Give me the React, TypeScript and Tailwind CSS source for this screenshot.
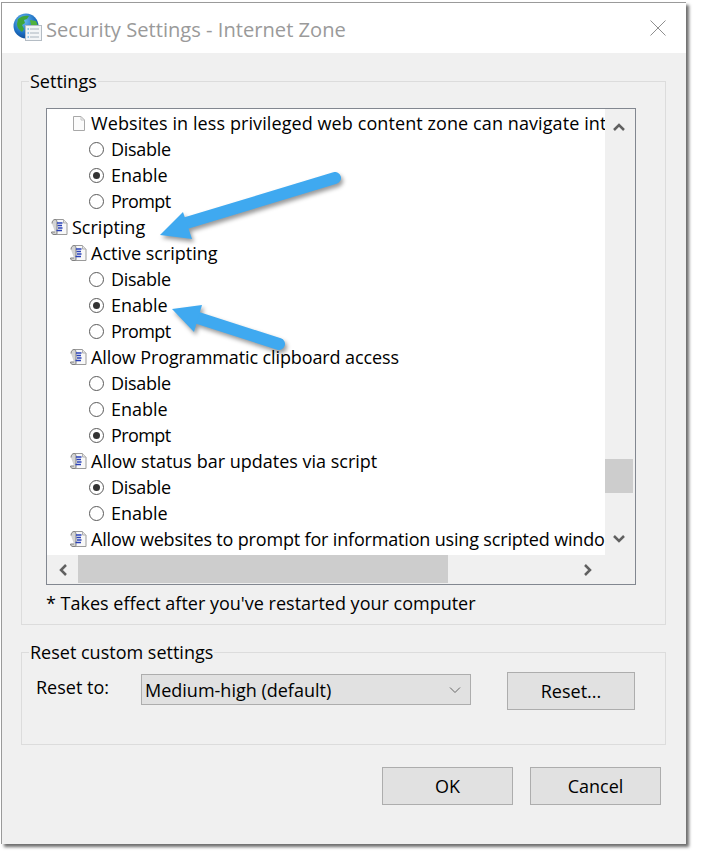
import React from "react";

const FONT = "[font-family:'Open_Sans','Noto_Sans',sans-serif]";

function Radio({ on }: { on?: boolean }) {
  return (
    <span className="flex h-[15px] w-[15px] shrink-0 items-center justify-center rounded-full border border-[#5a5a5a] bg-white">
      {on && <span className="h-[7px] w-[7px] rounded-full bg-[#333333]" />}
    </span>
  );
}

function ScriptIcon() {
  return (
    <svg width="17" height="18" viewBox="0 0 17 18" className="shrink-0">
      <path d="M4 1.500h8.500l3.500 3.500v11.500H5" fill="#f8f8f8" stroke="#9a9a9a" />
      <path d="M12.500 1.500V5H16" fill="#e4e4e4" stroke="#b0b0b0" />
      <path d="M1 5.500c0-2.500 1.500-4 3-4s2 1.500 2 3v9.500c0 1.500 0 2.500-1 2.500H3c-1.500 0-2.500-1-2.500-2.500H4" fill="#d4d4d4" stroke="#808080" />
      <path d="M6 5h5.500M6.500 7.500H11M7 10h4.500M5.500 12.500H11" stroke="#2a41b8" strokeWidth="1.300" fill="none" />
    </svg>
  );
}

function PageIcon() {
  return (
    <svg width="14" height="17" viewBox="0 0 14 17" className="shrink-0">
      <path d="M1.500 1.500h7.500l3.500 3.500v10.500h-11z" fill="#fbfbfb" stroke="#a8a8a8" />
      <path d="M9 1.500V5h3.500" fill="none" stroke="#c4c4c4" />
    </svg>
  );
}

function GlobeIcon() {
  return (
    <svg width="30" height="30" viewBox="0 0 30 30" className="shrink-0">
      <defs>
        <radialGradient id="g" cx="0.4" cy="0.3" r="0.8">
          <stop offset="0" stopColor="#6fc0f0" />
          <stop offset="0.6" stopColor="#1d70c4" />
          <stop offset="1" stopColor="#0d3f86" />
        </radialGradient>
      </defs>
      <circle cx="13" cy="13" r="12.500" fill="url(#g)" />
      <path d="M5 6c3-3 8-4 11-3l-2 3-3 1 1 3-3 2 2 4-2 3c-3-2-5-5-5-8z" fill="#3fa63a" />
      <path d="M17 7l6 1 2 5-4 2-3-3z" fill="#52b23e" />
      <rect x="12.500" y="12.500" width="16" height="15" fill="#f3f5f7" stroke="#b4bcc4" />
      <path d="M17 16h9M17 20h9M17 24h9" stroke="#a9b4be" fill="none" />
      <path d="M14.500 16h1.500M14.500 20h1.500M14.500 24h1.500" stroke="#3a9ad9" fill="none" />
    </svg>
  );
}

function Row({ indent, children }: { indent: string; children: React.ReactNode }) {
  return <div className={`flex h-[26px] items-center whitespace-nowrap ${indent}`}>{children}</div>;
}

function Head({ label, level = 1, page, track = "" }: { label: string; level?: number; page?: boolean; track?: string }) {
  return (
    <Row indent={level === 0 ? "pl-[4px]" : "pl-[23px]"}>
      <span className="flex w-[21px] shrink-0 justify-start">
        {page ? <span className="pl-[2px]"><PageIcon /></span> : <ScriptIcon />}
      </span>
      <span className={track}>{label}</span>
    </Row>
  );
}

function Option({ label, on }: { label: string; on?: boolean }) {
  const track = label === "Prompt" ? "tracking-[-0.6px]" : label === "Disable" ? "tracking-[-0.3px]" : "";
  return (
    <Row indent="pl-[42px]">
      <Radio on={on} />
      <span className={`ml-[7px] ${track}`}>{label}</span>
    </Row>
  );
}

function Btn({ label, w, h }: { label: string; w: string; h: string }) {
  return (
    <button className={`flex items-center justify-center border border-[#adadad] bg-[#e1e1e1] text-black ${w} ${h}`}>{label}</button>
  );
}

export default function App() {
  return (
    <div className={`relative h-[859px] w-[702px] overflow-hidden bg-white pl-px pt-[2px] text-[18px] leading-[26px] text-black ${FONT}`}>
      <div className="flex h-[842px] w-[685px] flex-col border-l border-t border-[#9a9a9a] bg-[#f0f0f0] shadow-[3px_3px_3px_#6e6e6e]">
        <div className="flex h-[50px] shrink-0 items-center bg-white pl-[11px] pr-[20px]">
          <GlobeIcon />
          <span className="ml-[3px] flex-1 pt-[2px] text-[20.15px] text-[#9a9a9a]">Security Settings - Internet Zone</span>
          <svg width="16" height="16" viewBox="0 0 16 16" stroke="#8f8f8f" fill="none">
            <path d="M0.500 0.500l15 15M15.500 0.500l-15 15" />
          </svg>
        </div>

        <fieldset className="ml-[19px] mr-[20px] mt-[15px] h-[557px] border border-[#dcdcdc] px-[24px] pt-[14px]">
          <legend className="ml-[-17px] px-[1px]">Settings</legend>
          <div className="flex h-[477px] w-[590px] flex-col border border-[#828790] bg-white">
            <div className="flex min-h-0 flex-1">
              <div className="min-w-0 flex-1 overflow-hidden pt-px">
                <Head label="Websites in less privileged web content zone can navigate int" page track="tracking-[0.09px]" />
                <Option label="Disable" />
                <Option label="Enable" on />
                <Option label="Prompt" />
                <Head label="Scripting" level={0} />
                <Head label="Active scripting" />
                <Option label="Disable" />
                <Option label="Enable" on />
                <Option label="Prompt" />
                <Head label="Allow Programmatic clipboard access" track="tracking-[-0.11px]" />
                <Option label="Disable" />
                <Option label="Enable" />
                <Option label="Prompt" on />
                <Head label="Allow status bar updates via script" />
                <Option label="Disable" on />
                <Option label="Enable" />
                <Head label="Allow websites to prompt for information using scripted windo" track="tracking-[-0.17px]" />
              </div>
              <div className="flex w-[30px] shrink-0 flex-col items-center bg-[#f0f0f0] pr-[2px]">
                <svg width="14" height="10" viewBox="0 0 14 10" className="mt-[13px]" fill="none" stroke="#606060" strokeWidth="2.500">
                  <path d="M2 8l5-5 5 5" />
                </svg>
                <div className="mt-[327px] h-[34px] w-full bg-[#cdcdcd]" />
                <svg width="14" height="10" viewBox="0 0 14 10" className="mt-[41px]" fill="none" stroke="#606060" strokeWidth="2.500">
                  <path d="M2 2l5 5 5-5" />
                </svg>
              </div>
            </div>
            <div className="flex h-[29px] shrink-0 items-center bg-[#f0f0f0]">
              <svg width="10" height="14" viewBox="0 0 10 14" className="ml-[11px]" fill="none" stroke="#606060" strokeWidth="2.500">
                <path d="M8 2l-5 5 5 5" />
              </svg>
              <div className="ml-[10px] h-[28px] w-[370px] self-start bg-[#cdcdcd]" />
              <svg width="10" height="14" viewBox="0 0 10 14" className="ml-[135px]" fill="none" stroke="#606060" strokeWidth="2.500">
                <path d="M2 2l5 5-5 5" />
              </svg>
            </div>
          </div>
          <p className="mt-[5px]">* Takes effect after you've restarted your computer</p>
        </fieldset>

        <fieldset className="ml-[19px] mr-[20px] mt-[14px] h-[106px] border border-[#dcdcdc] px-[14px] pt-[7px]">
          <legend className="ml-[-7px] px-[1px]">Reset custom settings</legend>
          <div className="flex items-start">
            <span className="mt-[2px] w-[105px]">Reset to:</span>
            <div className="mt-[2px] flex h-[31px] w-[330px] items-center justify-between border border-[#adadad] bg-[#e1e1e1] pl-[3px] pr-[9px]">
              <span>Medium-high (default)</span>
              <svg width="12" height="8" viewBox="0 0 12 8" fill="none" stroke="#666666">
                <path d="M1 1.500l5 5 5-5" />
              </svg>
            </div>
            <div className="ml-[36px]"><Btn label="Reset..." w="w-[128px]" h="h-[38px]" /></div>
          </div>
        </fieldset>

        <div className="mr-[25px] mt-[22px] flex justify-end gap-[17px]">
          <Btn label="OK" w="w-[131px]" h="h-[38px]" />
          <Btn label="Cancel" w="w-[131px]" h="h-[38px]" />
        </div>
      </div>

      <svg width="702" height="859" viewBox="0 0 702 859" className="pointer-events-none absolute left-0 top-0 drop-shadow-[2px_3px_2px_rgba(0,0,0,0.4)]">
        <path d="M335 178L183 224" stroke="#3fa9f0" strokeWidth="12" strokeLinecap="round" fill="none" />
        <path d="M160 235L183 212L192 239z" fill="#3fa9f0" />
        <path d="M279 344L198 318" stroke="#3fa9f0" strokeWidth="12" strokeLinecap="round" fill="none" />
        <path d="M172 309L202 305L194 332z" fill="#3fa9f0" />
      </svg>
    </div>
  );
}
